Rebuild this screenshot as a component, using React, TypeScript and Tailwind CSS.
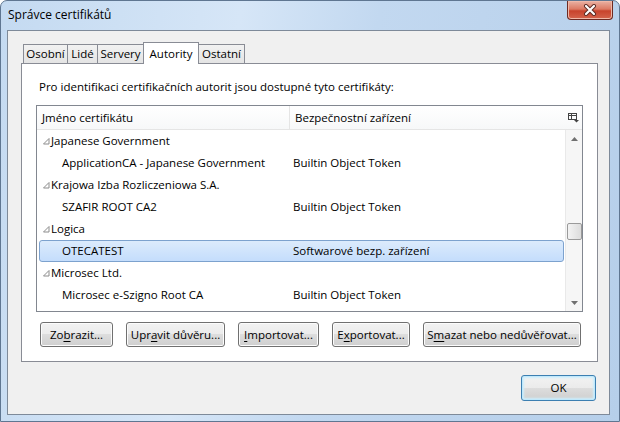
import React from "react";

const font = "font-['Open_Sans',sans-serif]";

function Tri() {
  return (
    <svg width="7" height="7" viewBox="0 0 7 7" className="mr-[1px] shrink-0">
      <path d="M6 0.5 L6 6 L0.5 6 Z" fill="none" stroke="#8c8c8c" strokeWidth="1" />
    </svg>
  );
}

function Row({
  group,
  name,
  device,
  selected,
}: {
  group?: boolean;
  name: string;
  device?: string;
  selected?: boolean;
}) {
  return (
    <div
      className={
        "flex h-[22px] items-center " +
        (selected
          ? "ml-[2px] mr-px rounded-[3px] border border-[#7da2ce] bg-[linear-gradient(to_bottom,#dcebfc,#c4ddfc)]"
          : "ml-[2px] mr-px border border-transparent")
      }
    >
      {group ? (
        <div className="flex items-center pl-[3px]">
          <Tri />
          <span>{name}</span>
        </div>
      ) : (
        <>
          <span className="w-[253px] shrink-0 pl-[22px]">{name}</span>
          <span>{device}</span>
        </>
      )}
    </div>
  );
}

function Btn({ w, children }: { w: string; children: React.ReactNode }) {
  return (
    <div
      className={
        w +
        " flex h-[25px] items-center justify-center rounded-[3px] border border-[#707070] bg-[linear-gradient(to_bottom,#f2f2f2_0%,#ebebeb_50%,#dddddd_50%,#cfcfcf_100%)] shadow-[inset_0_0_0_1px_#fcfcfc]"
      }
    >
      {children}
    </div>
  );
}

function U({ children }: { children: React.ReactNode }) {
  return <span className="underline underline-offset-[2px]">{children}</span>;
}

export default function App() {
  const tabs = ["Osobní", "Lidé", "Servery", "Autority", "Ostatní"];
  return (
    <div
      className={
        font +
        " flex h-[422px] w-[620px] flex-col rounded-t-[7px] border border-[#5f7691] bg-[linear-gradient(100deg,#c4daf1_0%,#d6e6f7_35%,#c2d8f0_55%,#b6cfea_100%)] text-[11.5px] text-black"
      }
    >
      {/* title bar */}
      <div className="flex h-[29px] items-start">
        <div className="mt-[6px] pl-[7px] text-[12px] leading-[16px]">Správce certifikátů</div>
        <div className="ml-auto mr-[6px] flex h-[19px] w-[46px] items-center justify-center rounded-b-[4px] border border-t-0 border-[#6d2a22] bg-[linear-gradient(to_bottom,#eab2a4_0%,#dc7a64_45%,#c8432c_55%,#d4644c_100%)] shadow-[inset_0_0_0_1px_#f0b8a8]">
          <svg width="14" height="12" viewBox="0 0 14 12">
            <path d="M3 2 L11 10 M11 2 L3 10" stroke="#5a2a22" strokeWidth="4" strokeLinecap="round" />
            <path d="M3 2 L11 10 M11 2 L3 10" stroke="#ffffff" strokeWidth="2.2" strokeLinecap="round" />
          </svg>
        </div>
      </div>

      {/* client area */}
      <div className="ml-[6px] mr-[9px] flex h-[385px] flex-col border border-[#7e8a99] bg-[#f0f0f0]">
        {/* tabs */}
        <div className="relative z-10 -mb-px ml-[15px] mt-[11px] flex h-[22px] items-end">
          {tabs.map((t) =>
            t === "Autority" ? (
              <div
                key={t}
                className="-mx-px flex h-[22px] w-[56px] items-start justify-center border border-b-0 border-[#898c95] bg-white pt-[2px]"
              >
                {t}
              </div>
            ) : (
              <div
                key={t}
                className={
                  "flex h-[20px] items-center justify-center border border-[#898c95] bg-[linear-gradient(to_bottom,#f2f2f2,#e4e4e4)] " +
                  (t === "Osobní"
                    ? "w-[45px]"
                    : t === "Lidé"
                    ? "-ml-px w-[31px]"
                    : t === "Servery"
                    ? "-ml-px w-[47px]"
                    : "w-[47px]")
                }
              >
                {t}
              </div>
            )
          )}
        </div>

        {/* tab panel */}
        <div className="ml-[13px] flex h-[299px] w-[577px] flex-col border border-[#898c95] bg-white">
          <div className="ml-[17px] mt-[15px] h-[16px] leading-[16px]">
            Pro identifikaci certifikačních autorit jsou dostupné tyto certifikáty:
          </div>

          {/* list */}
          <div className="ml-[14px] mt-[10px] flex h-[207px] w-[547px] flex-col border border-[#828790] bg-white">
            <div className="flex h-[24px] border-b border-[#e5e5e5] bg-[linear-gradient(to_bottom,#ffffff,#f7f8f9)]">
              <div className="flex w-[253px] items-center border-r border-[#e5e5e5] pl-[5px]">Jméno certifikátu</div>
              <div className="flex flex-1 items-center pl-[5px]">Bezpečnostní zařízení</div>
              <div className="flex w-[18px] items-center justify-center">
                <svg width="11" height="10" viewBox="0 0 11 10">
                  <rect x="0.5" y="0.5" width="8" height="6" fill="none" stroke="#444" />
                  <path d="M0.5 2.5 H8.5 M3.5 0.5 V6.5" stroke="#444" />
                  <path d="M6 7 H11 L8.5 9.5 Z" fill="#444" />
                </svg>
              </div>
            </div>
            <div className="flex flex-1">
              <div className="flex-1 overflow-hidden">
                <Row group name="Japanese Government" />
                <Row name="ApplicationCA - Japanese Government" device="Builtin Object Token" />
                <Row group name="Krajowa Izba Rozliczeniowa S.A." />
                <Row name="SZAFIR ROOT CA2" device="Builtin Object Token" />
                <Row group name="Logica" />
                <Row selected name="OTECATEST" device="Softwarové bezp. zařízení" />
                <Row group name="Microsec Ltd." />
                <Row name="Microsec e-Szigno Root CA" device="Builtin Object Token" />
              </div>
              {/* scrollbar */}
              <div className="flex w-[17px] flex-col items-center border-l border-[#e9e9e9] bg-[#f6f6f6]">
                <div className="flex h-[17px] items-center justify-center">
                  <svg width="7" height="4" viewBox="0 0 7 4">
                    <path d="M0 4 L3.5 0 L7 4 Z" fill="#707070" />
                  </svg>
                </div>
                <div className="mt-[76px] h-[17px] w-[15px] rounded-[2px] border border-[#9a9a9a] bg-[linear-gradient(to_right,#f3f3f3,#dcdcdc)]" />
                <div className="mt-auto flex h-[17px] items-center justify-center">
                  <svg width="7" height="4" viewBox="0 0 7 4">
                    <path d="M0 0 L7 0 L3.5 4 Z" fill="#707070" />
                  </svg>
                </div>
              </div>
            </div>
          </div>

          {/* buttons */}
          <div className="ml-[18px] mt-[10px] flex gap-[13px]">
            <Btn w="w-[73px]">
              Zo<U>b</U>razit...
            </Btn>
            <Btn w="w-[99px]">
              Upr<U>a</U>vit důvěru...
            </Btn>
            <Btn w="w-[81px]">
              <U>I</U>mportovat...
            </Btn>
            <Btn w="w-[78px]">
              E<U>x</U>portovat...
            </Btn>
            <Btn w="w-[158px]">
              S<U>m</U>azat nebo nedůvěřovat...
            </Btn>
          </div>
        </div>

        {/* OK */}
        <div className="mr-[13px] mt-[13px] flex justify-end">
          <div className="flex h-[26px] w-[75px] items-center justify-center rounded-[3px] border border-[#3c7fb1] bg-[linear-gradient(to_bottom,#f2f2f2_0%,#ebebeb_50%,#dddddd_50%,#cfcfcf_100%)] shadow-[inset_0_0_0_1px_#bfe8fb,inset_0_0_2px_2px_#cdeefc]">
            OK
          </div>
        </div>
      </div>
    </div>
  );
}
